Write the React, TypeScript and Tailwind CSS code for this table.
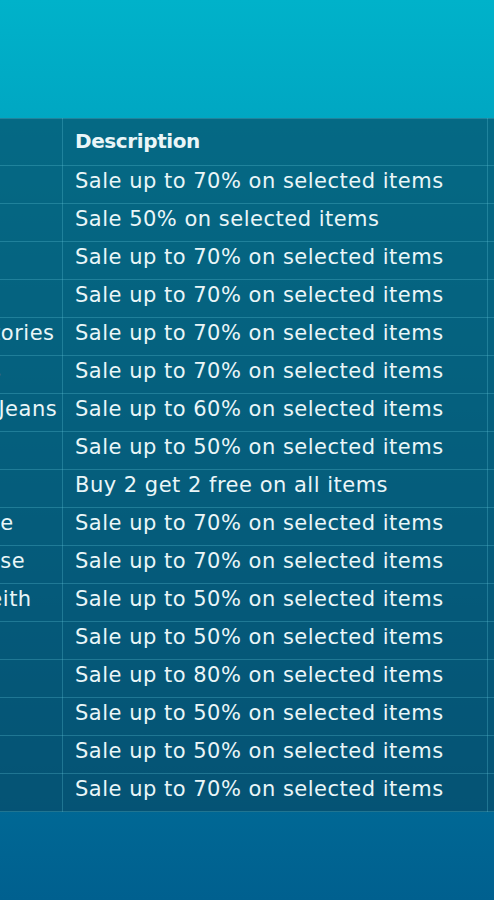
const rows = [
  { store: "Zara", description: "Sale up to 70% on selected items", ends: "31 Dec" },
  { store: "H&M", description: "Sale 50% on selected items", ends: "15 Jan" },
  { store: "Gant", description: "Sale up to 70% on selected items", ends: "31 Dec" },
  { store: "Gap", description: "Sale up to 70% on selected items", ends: "04 Jan" },
  { store: "Bag Stories", description: "Sale up to 70% on selected items", ends: "31 Dec" },
  { store: "Fossils", description: "Sale up to 70% on selected items", ends: "10 Jan" },
  { store: "Levi's Jeans", description: "Sale up to 60% on selected items", ends: "31 Dec" },
  { store: "Nike", description: "Sale up to 50% on selected items", ends: "07 Jan" },
  { store: "Puma", description: "Buy 2 get 2 free on all items", ends: "31 Dec" },
  { store: "Lacoste", description: "Sale up to 70% on selected items", ends: "12 Jan" },
  { store: "Primrose", description: "Sale up to 70% on selected items", ends: "31 Dec" },
  { store: "Tim Keith", description: "Sale up to 50% on selected items", ends: "20 Jan" },
  { store: "Asos", description: "Sale up to 50% on selected items", ends: "31 Dec" },
  { store: "Vans", description: "Sale up to 80% on selected items", ends: "05 Jan" },
  { store: "Boden", description: "Sale up to 50% on selected items", ends: "31 Dec" },
  { store: "Uniqlo", description: "Sale up to 50% on selected items", ends: "18 Jan" },
  { store: "Next", description: "Sale up to 70% on selected items", ends: "31 Dec" },
];

export default function App() {
  return (
    <div className="h-[900px] w-full overflow-hidden bg-linear-to-b from-[#00b2ca] to-[#00608f] pt-[118px] font-['DejaVu_Sans',sans-serif] text-[21px] tracking-[0.5px] text-[#eaf6f8]">
      <table className="ml-[-88px] w-[775px] table-fixed border-collapse bg-[rgba(7,73,100,0.66)]">
        <colgroup>
          <col className="w-[150px]" />
          <col className="w-[425px]" />
          <col className="w-[200px]" />
        </colgroup>
        <thead>
          <tr className="h-[47px]">
            <th className="overflow-hidden border border-[#5fc4d6]/30 pr-3 pl-[16px] pb-[3px] text-left text-[20px] font-semibold tracking-[-0.4px] whitespace-nowrap">Store</th>
            <th className="border border-[#5fc4d6]/30 px-3 pb-[3px] text-left text-[20px] font-semibold tracking-[-0.4px]">Description</th>
            <th className="border border-[#5fc4d6]/30 px-3 pb-[3px] text-left text-[20px] font-semibold tracking-[-0.4px]">Ends</th>
          </tr>
        </thead>
        <tbody>
          {rows.map((row) => (
            <tr key={row.store} className="h-[38px]">
              <td className="overflow-hidden border border-[#5fc4d6]/30 pr-3 pl-[16px] pb-[5px] whitespace-nowrap">{row.store}</td>
              <td className="border border-[#5fc4d6]/30 px-3 pb-[5px] whitespace-nowrap">{row.description}</td>
              <td className="border border-[#5fc4d6]/30 px-3 pb-[5px] whitespace-nowrap">{row.ends}</td>
            </tr>
          ))}
        </tbody>
      </table>
    </div>
  );
}
